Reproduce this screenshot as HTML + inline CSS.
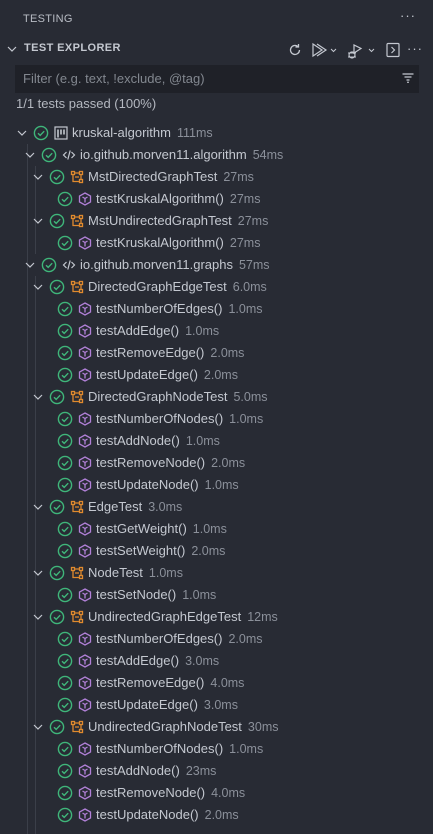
<!DOCTYPE html>
<html><head><style>
body{margin:0;width:433px;height:834px;background:#282b34;font-family:"Liberation Sans",sans-serif;color:#c4c8d0;overflow:hidden;position:relative}
.a{position:absolute}
.row{position:absolute;left:0;height:22px;width:433px;font-size:13px;line-height:22px;white-space:nowrap}
.row svg{position:absolute}
.t{position:absolute;top:0}
.ms{color:#8b909a;margin-left:6px;font-size:12.5px}
.g{position:absolute;width:1px;background:#3b3f49}
</style></head><body>
<svg width="0" height="0" style="position:absolute">
<defs>
<symbol id="chev" viewBox="0 0 12 12"><path d="M2 4l4 4 4-4" fill="none" stroke="#c4c8d0" stroke-width="1.2"/></symbol>
<symbol id="ok" viewBox="0 0 16 16"><circle cx="8" cy="8" r="6.6" fill="none" stroke="#3fb67a" stroke-width="1.4"/><path d="M5 8.2l2.2 2.2 4-4.2" fill="none" stroke="#3fb67a" stroke-width="1.4"/></symbol>
<symbol id="cls" viewBox="0 0 14 14"><g fill="none" stroke="#e08a2e" stroke-width="1.3"><rect x="1.5" y="1.5" width="3" height="3"/><rect x="9.5" y="9.5" width="3" height="3"/><rect x="9.5" y="1.5" width="3" height="3"/><path d="M4.5 3h5M11 4.5v5M3 4.5v7h6.5M5 7h4"/></g></symbol>
<symbol id="mth" viewBox="0 0 14 14"><g fill="none" stroke="#b180d7" stroke-width="1.3"><path d="M7 1l5.5 3v6L7 13 1.5 10V4z"/><path d="M4.5 5L7 6.5 9.5 5M7 6.5v4"/></g></symbol>
<symbol id="code" viewBox="0 0 14 14"><path d="M4.5 4L1.5 7l3 3M9.5 4l3 3-3 3M8.2 2.5l-2.4 9" fill="none" stroke="#c4c8d0" stroke-width="1.2"/></symbol>
<symbol id="proj" viewBox="0 0 14 14"><rect x="1" y="1" width="12" height="12" fill="none" stroke="#c4c8d0" stroke-width="1.2"/><path d="M4 3.5v8M7 3.5v5M10 3.5v5" stroke="#c4c8d0" stroke-width="1.6"/></symbol>
</defs></svg>

<div class="a" style="left:23px;top:13px;font-size:11px;letter-spacing:.3px;color:#b8bcc4">TESTING</div>
<div class="a" style="left:400px;top:8px;font-size:13px;color:#c4c8d0;letter-spacing:1px">···</div>
<svg class="a" style="left:6px;top:43px" width="12" height="12"><use href="#chev"/></svg>
<div class="a" style="left:24px;top:42px;font-size:11px;font-weight:bold;letter-spacing:.4px;color:#c4c8d0">TEST EXPLORER</div>
<svg class="a" style="left:287px;top:42px" width="16" height="16" viewBox="0 0 16 16"><path d="M12.5 8a4.5 4.5 0 1 1-1.4-3.3M11.5 2v3h-3" fill="none" stroke="#c4c8d0" stroke-width="1.3"/></svg>
<svg class="a" style="left:311px;top:42px" width="28" height="16" viewBox="0 0 28 16"><path d="M2 2v12l9-6z M6 2l9 6-9 6" fill="none" stroke="#c4c8d0" stroke-width="1.2"/><path d="M20 7l2.5 2.5L25 7" fill="none" stroke="#c4c8d0" stroke-width="1"/></svg>
<svg class="a" style="left:347px;top:42px" width="30" height="18" viewBox="0 0 30 18"><path d="M7 3v8l7-4.5z" fill="none" stroke="#c4c8d0" stroke-width="1.2"/><circle cx="5" cy="13" r="3" fill="none" stroke="#c4c8d0" stroke-width="1.2"/><path d="M1 11h8M1 15h8" stroke="#c4c8d0"/><path d="M22 7l2.5 2.5L27 7" fill="none" stroke="#c4c8d0" stroke-width="1"/></svg>
<svg class="a" style="left:386px;top:42px" width="14" height="16" viewBox="0 0 14 16"><rect x="1" y="1.5" width="12" height="13" rx="1" fill="none" stroke="#c4c8d0" stroke-width="1.2"/><path d="M5.5 5l3 3-3 3" fill="none" stroke="#c4c8d0" stroke-width="1.2"/></svg>
<div class="a" style="left:407px;top:41px;font-size:13px;letter-spacing:1px">···</div>

<div class="a" style="left:15px;top:65px;width:404px;height:28px;background:#1f2128"></div>
<div class="a" style="left:23px;top:71px;font-size:13px;color:#82878f">Filter (e.g. text, !exclude, @tag)</div>
<svg class="a" style="left:402px;top:73px" width="12" height="10" viewBox="0 0 12 10"><path d="M0.5 1h11M2.5 4h7M4.5 7h3M5.2 9.3h1.6" stroke="#c4c8d0" stroke-width="1.3"/></svg>
<div class="a" style="left:16px;top:96px;font-size:13px;color:#b4b8c0">1/1 tests passed (100%)</div>

<div class="g" style="left:27px;top:144px;height:690px"></div>
<div class="g" style="left:35px;top:166px;height:88px"></div>
<div class="g" style="left:35px;top:276px;height:558px"></div>

<div id="tree"></div>
<script>
var rows=[
[0,'kruskal-algorithm','111ms','proj'],
[1,'io.github.morven11.algorithm','54ms','code'],
[2,'MstDirectedGraphTest','27ms','cls'],
[3,'testKruskalAlgorithm()','27ms','mth'],
[2,'MstUndirectedGraphTest','27ms','cls'],
[3,'testKruskalAlgorithm()','27ms','mth'],
[1,'io.github.morven11.graphs','57ms','code'],
[2,'DirectedGraphEdgeTest','6.0ms','cls'],
[3,'testNumberOfEdges()','1.0ms','mth'],
[3,'testAddEdge()','1.0ms','mth'],
[3,'testRemoveEdge()','2.0ms','mth'],
[3,'testUpdateEdge()','2.0ms','mth'],
[2,'DirectedGraphNodeTest','5.0ms','cls'],
[3,'testNumberOfNodes()','1.0ms','mth'],
[3,'testAddNode()','1.0ms','mth'],
[3,'testRemoveNode()','2.0ms','mth'],
[3,'testUpdateNode()','1.0ms','mth'],
[2,'EdgeTest','3.0ms','cls'],
[3,'testGetWeight()','1.0ms','mth'],
[3,'testSetWeight()','2.0ms','mth'],
[2,'NodeTest','1.0ms','cls'],
[3,'testSetNode()','1.0ms','mth'],
[2,'UndirectedGraphEdgeTest','12ms','cls'],
[3,'testNumberOfEdges()','2.0ms','mth'],
[3,'testAddEdge()','3.0ms','mth'],
[3,'testRemoveEdge()','4.0ms','mth'],
[3,'testUpdateEdge()','3.0ms','mth'],
[2,'UndirectedGraphNodeTest','30ms','cls'],
[3,'testNumberOfNodes()','1.0ms','mth'],
[3,'testAddNode()','23ms','mth'],
[3,'testRemoveNode()','4.0ms','mth'],
[3,'testUpdateNode()','2.0ms','mth']];
var h='';
rows.forEach(function(r,i){
 var d=r[0],top=122+i*22,o=8*d;
 h+='<div class="row" style="top:'+top+'px">';
 if(d<3)h+='<svg style="left:'+(16+o)+'px;top:5px" width="12" height="12"><use href="#chev"/></svg>';
 h+='<svg style="left:'+(33+o)+'px;top:3px" width="16" height="16"><use href="#ok"/></svg>';
 h+='<svg style="left:'+(54+o)+'px;top:4px" width="14" height="14"><use href="#'+r[3]+'"/></svg>';
 h+='<span class="t" style="left:'+(72+o)+'px">'+r[1]+'<span class="ms">'+r[2]+'</span></span></div>';
});
document.getElementById('tree').innerHTML=h;
</script>
</body></html>
